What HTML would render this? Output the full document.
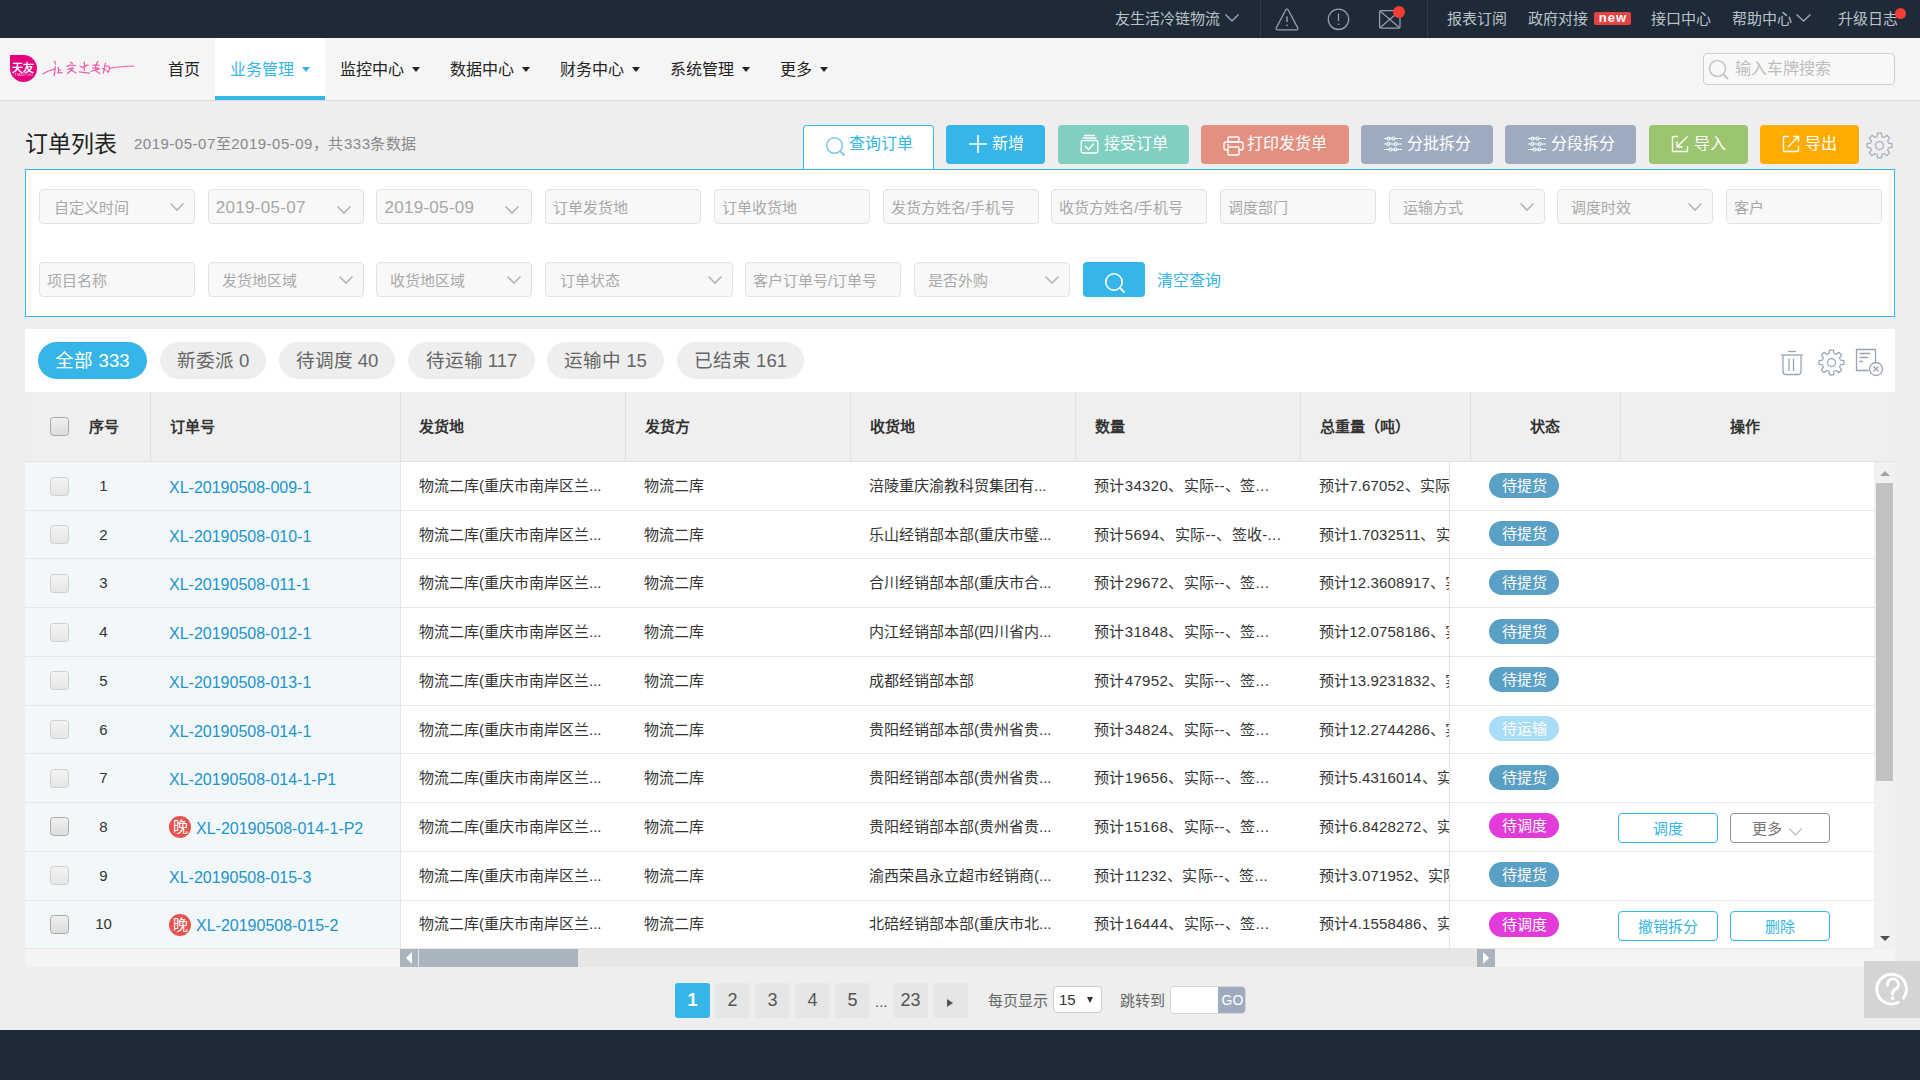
<!DOCTYPE html>
<html lang="zh-CN"><head><meta charset="utf-8">
<style>
*{box-sizing:border-box;margin:0;padding:0}
html,body{width:1920px;height:1080px;overflow:hidden}
body{position:relative;background:#eeeeee;font-family:"Liberation Sans",sans-serif;color:#333;font-size:15px}
.a{position:absolute;white-space:nowrap}
.topbar{left:0;top:0;width:1920px;height:38px;background:#1e2a38}
.tb{color:#bcc2c9;font-size:15px;line-height:38px;top:0}
.nav{left:0;top:38px;width:1920px;height:63px;background:#f5f5f5;border-bottom:1px solid #dcdcdc}
.tab{top:0;height:62px;line-height:64px;font-size:16px;color:#222}
.caret{display:inline-block;width:0;height:0;border-left:4px solid transparent;border-right:4px solid transparent;border-top:5px solid #222;vertical-align:middle;margin-left:8px;position:relative;top:-1px}
.btn{top:125px;height:39px;border-radius:4px;color:#fff;font-size:16px;line-height:37px}
.panel{left:25px;top:169px;width:1870px;height:148px;border:1px solid #35b5e8;background:#fff}
.fld{height:35px;border:1px solid #e2e2e2;border-radius:4px;background:#f8f8f8;color:#aaa;font-size:15px;line-height:35px}
.chev{position:absolute;right:9px;top:12px}
.card{left:25px;top:329px;width:1870px;height:63px;background:#fff}
.pill{top:342px;height:37px;line-height:38px;border-radius:19px;background:#eeeeee;color:#666;font-size:18.6px;text-align:center}
.thead{left:25px;top:392px;width:1870px;height:70px;background:#efefef;border-bottom:1px solid #e2e2e2}
.th{top:0;height:69px;line-height:69px;font-size:15px;font-weight:bold;color:#333}
.vd{top:0;width:1px;height:69px;background:#e0e0e0}
.row{height:49px;border-bottom:1px solid #e6e6e6}
.cell{line-height:48px;font-size:15px;color:#333}
</style></head><body>

<!-- TOP BAR -->
<div class="a topbar">
  <div class="a tb" style="left:1115px">友生活冷链物流</div>
  <svg class="a" style="left:1224px;top:13px" width="16" height="10" viewBox="0 0 16 10"><path d="M1.5 1.5 L8 8 L14.5 1.5" fill="none" stroke="#9aa3ad" stroke-width="1.5"/></svg>
  <div class="a" style="left:1260px;top:0;width:1px;height:38px;background:#2f3b49"></div>
  <svg class="a" style="left:1275px;top:8px" width="24" height="23" viewBox="0 0 24 23"><path d="M10.6 2.2 Q12 0 13.4 2.2 L22.6 19.6 Q23.6 21.8 21.4 21.8 H2.6 Q0.4 21.8 1.4 19.6 Z" fill="none" stroke="#959fa9" stroke-width="1.3" stroke-linejoin="round"/><path d="M12 8.5 V14" stroke="#959fa9" stroke-width="1.5"/><rect x="11.2" y="16.6" width="1.6" height="1.5" fill="#959fa9"/></svg>
  <svg class="a" style="left:1327px;top:8px" width="24" height="24" viewBox="0 0 24 24"><circle cx="11.5" cy="11.3" r="10.2" fill="none" stroke="#959fa9" stroke-width="1.3"/><path d="M11.5 5.5 V13" stroke="#959fa9" stroke-width="1.3"/><rect x="10.8" y="15.6" width="1.4" height="1.4" fill="#959fa9"/></svg>
  <svg class="a" style="left:1378px;top:9px" width="24" height="21" viewBox="0 0 24 21"><rect x="1.6" y="1.6" width="20.4" height="17.6" rx="1.5" fill="none" stroke="#959fa9" stroke-width="1.3"/><path d="M2 2 L21.6 18.8 M21.6 2 L2 18.8" fill="none" stroke="#959fa9" stroke-width="1.2"/></svg>
  <div class="a" style="left:1393px;top:6px;width:12px;height:12px;border-radius:6px;background:#f23d37"></div>
  <div class="a" style="left:1427px;top:0;width:1px;height:38px;background:#2f3b49"></div>
  <div class="a tb" style="left:1447px">报表订阅</div>
  <div class="a tb" style="left:1528px">政府对接</div>
  <div class="a" style="left:1594px;top:12px;width:37px;height:13px;border-radius:2px;background:#e8423f;color:#fff;font-size:13px;font-weight:bold;line-height:11.5px;text-align:center;letter-spacing:1px;text-indent:1px">new</div>
  <div class="a tb" style="left:1651px">接口中心</div>
  <div class="a tb" style="left:1732px">帮助中心</div>
  <svg class="a" style="left:1795px;top:13px" width="17" height="10" viewBox="0 0 17 10"><path d="M1.5 1.5 L8.5 8 L15.5 1.5" fill="none" stroke="#9aa3ad" stroke-width="1.5"/></svg>
  <div class="a tb" style="left:1838px">升级日志</div>
  <div class="a" style="left:1895px;top:8px;width:11px;height:11px;border-radius:6px;background:#f23d37"></div>
</div>
<!-- NAV -->
<div class="a nav">
  <svg class="a" style="left:10px;top:17px" width="27" height="27" viewBox="0 0 27 27"><path d="M0 0 H13.5 A13.5 13.5 0 0 1 27 13.5 A13.5 13.5 0 0 1 13.5 27 A13.5 13.5 0 0 1 0 13.5 Z" fill="#e5007f"/><text x="13" y="16.5" font-size="11" font-weight="bold" fill="#fff" text-anchor="middle" font-family="Liberation Sans, sans-serif">天友</text><text x="4.2" y="21.2" font-size="2.8" fill="#fff" fill-opacity="0.85" textLength="18.5" lengthAdjust="spacingAndGlyphs" font-family="Liberation Sans">TIANYOU</text></svg>
  <svg class="a" style="left:40px;top:18px" width="100" height="24" viewBox="0 0 100 24"><g fill="none" stroke="#e6007e" stroke-opacity="0.62" stroke-width="1.25" stroke-linecap="round" stroke-linejoin="round"><path d="M3 17.8 C6 16 10 14 14.5 13.2"/><path d="M14.8 5.2 L15.3 8.2"/><path d="M15.3 10.5 C15.2 13.5 14.8 16.5 14.2 19.6"/><path d="M18.2 11.5 L18.6 16.8 M17.2 17 L22.2 16.6 M18.4 14.2 L20.8 14"/><path d="M30.2 6.2 L32.4 7.4 M27 10.4 C30 8.8 33 9 35.2 9.6 M28 13.4 C30 12.2 32 11.6 33.4 12 C31.4 14 29.4 16 27.4 17.4 M30.4 13.6 C32.4 15 34.2 16 36 17"/><path d="M44.2 6.2 L44.6 9.2 M40.2 10.4 C42 11.4 44 12 45.2 10.4 C46.2 9.2 47 8.8 48.2 9.4 M44.2 9.6 L44.2 14.4 M39.4 15.8 C42.4 16.4 46.4 16.8 49.6 17.2"/><path d="M57.8 5.4 L55.4 10 L56 14.2 M53 9.2 H59 M52.4 12 H58.8 M51.2 15.4 C54 14.4 57 13.2 59.2 12.8 M55.4 14.4 L59.8 17.6"/><path d="M65.4 7.2 L63.4 17.2 M62.4 12.2 L66.2 14.2 M66.2 10.2 C68.2 9.2 70.2 10.2 69.4 13.2 C68.6 16 67.6 17.2 67.4 15.2 M69.4 12.4 C74 11.2 82 10.6 93.6 10"/></g></svg>
  <div class="a tab" style="left:168px">首页</div>
  <div class="a" style="left:215px;top:0;width:110px;height:62px;background:#fff;border-bottom:4px solid #35b5e8"></div>
  <div class="a tab" style="left:230px;color:#35b5e8">业务管理<span class="caret" style="border-top-color:#35b5e8"></span></div>
  <div class="a tab" style="left:340px">监控中心<span class="caret"></span></div>
  <div class="a tab" style="left:450px">数据中心<span class="caret"></span></div>
  <div class="a tab" style="left:560px">财务中心<span class="caret"></span></div>
  <div class="a tab" style="left:670px">系统管理<span class="caret"></span></div>
  <div class="a tab" style="left:780px">更多<span class="caret"></span></div>
  <div class="a" style="left:1703px;top:15px;width:192px;height:32px;border:1px solid #cfcfcf;border-radius:4px;background:#f8f8f8"></div>
  <svg class="a" style="left:1708px;top:21px" width="22" height="21" viewBox="0 0 22 21"><circle cx="9.5" cy="9.5" r="8" fill="none" stroke="#c6c6c6" stroke-width="1.6"/><path d="M15 15 L20 20" stroke="#c6c6c6" stroke-width="1.8"/></svg>
  <div class="a" style="left:1735px;top:15px;line-height:32px;font-size:16px;color:#bdbdbd">输入车牌搜索</div>
</div>

<!-- TITLE -->
<div class="a" style="left:25px;top:126px;font-size:23px;line-height:36px;color:#222">订单列表</div>
<div class="a" style="left:134px;top:132px;font-size:15px;line-height:24px;color:#888;letter-spacing:0.5px">2019-05-07至2019-05-09，共333条数据</div>
<div class="a" style="left:803px;top:125px;width:131px;height:45px;background:#fff;border:1px solid #35b5e8;border-bottom:none;border-radius:4px 4px 0 0"></div>
<svg class="a" style="left:825px;top:136px;z-index:3" width="22" height="21" viewBox="0 0 22 21"><circle cx="9.5" cy="9.5" r="7.8" fill="none" stroke="#7cc6ec" stroke-width="1.6"/><path d="M15 15 L19.5 19.5" stroke="#7cc6ec" stroke-width="1.8"/></svg>
<div class="a" style="left:849px;top:125px;line-height:37px;font-size:16px;color:#35b5e8;z-index:3">查询订单</div>
<div class="a btn" style="left:946px;width:99px;background:#35b5e8;text-align:center"><svg width="20" height="20" viewBox="0 0 20 20" style="vertical-align:middle;margin-right:4px;position:relative;top:-1px"><path d="M10 1 V19 M1 10 H19" stroke="#fff" stroke-width="1.6"/></svg>新增</div>
<div class="a btn" style="left:1058px;width:131px;background:#80cfc0;text-align:center"><svg width="19" height="20" viewBox="0 0 19 20" style="vertical-align:middle;margin-right:5px;position:relative;top:-1px"><path d="M4 1.5 H15 M2.5 4 H16.5" stroke="#fff" stroke-width="1.3"/><rect x="1.2" y="6.5" width="16.6" height="12.5" rx="2" fill="none" stroke="#fff" stroke-width="1.4"/><path d="M5 12 L8.5 15.5 L14 9.5" fill="none" stroke="#fff" stroke-width="1.4"/></svg>接受订单</div>
<div class="a btn" style="left:1201px;width:148px;background:#e49080;text-align:center"><svg width="21" height="20" viewBox="0 0 21 20" style="vertical-align:middle;margin-right:3px;position:relative;top:1px"><rect x="5" y="1" width="11" height="5" rx="1" fill="none" stroke="#fff" stroke-width="1.4"/><rect x="1" y="6" width="19" height="8" rx="2" fill="none" stroke="#fff" stroke-width="1.4"/><rect x="5" y="11" width="11" height="8" rx="1" fill="#e49080" stroke="#fff" stroke-width="1.4"/><path d="M4 9 H6" stroke="#fff" stroke-width="1.4"/></svg>打印发货单</div>
<div class="a btn" style="left:1361px;width:132px;background:#9eabbf;text-align:center"><svg width="20" height="16" viewBox="0 0 20 16" style="vertical-align:middle;margin-right:4px;position:relative;top:-1px"><g fill="none" stroke="#fff" stroke-width="1.2"><path d="M1 2.5 H4 M7 2.5 H9 M12 2.5 H19 M1 8 H4 M7 8 H11 M14 8 H19 M1 13.5 H6 M9 13.5 H11 M14 13.5 H19"/><circle cx="5.5" cy="2.5" r="1.5"/><circle cx="10.5" cy="2.5" r="1.5"/><circle cx="5.5" cy="8" r="1.5"/><circle cx="12.5" cy="8" r="1.5"/><circle cx="7.5" cy="13.5" r="1.5"/><circle cx="12.5" cy="13.5" r="1.5"/></g></svg>分批拆分</div>
<div class="a btn" style="left:1505px;width:131px;background:#9eabbf;text-align:center"><svg width="20" height="16" viewBox="0 0 20 16" style="vertical-align:middle;margin-right:4px;position:relative;top:-1px"><g fill="none" stroke="#fff" stroke-width="1.2"><path d="M1 2.5 H4 M7 2.5 H9 M12 2.5 H19 M1 8 H4 M7 8 H11 M14 8 H19 M1 13.5 H6 M9 13.5 H11 M14 13.5 H19"/><circle cx="5.5" cy="2.5" r="1.5"/><circle cx="10.5" cy="2.5" r="1.5"/><circle cx="5.5" cy="8" r="1.5"/><circle cx="12.5" cy="8" r="1.5"/><circle cx="7.5" cy="13.5" r="1.5"/><circle cx="12.5" cy="13.5" r="1.5"/></g></svg>分段拆分</div>
<div class="a btn" style="left:1649px;width:99px;background:#9bc56f;text-align:center"><svg width="18" height="18" viewBox="0 0 18 18" style="vertical-align:middle;margin-right:5px;position:relative;top:-1px"><path d="M7 1.5 H2.5 A1 1 0 0 0 1.5 2.5 V15.5 A1 1 0 0 0 2.5 16.5 H15.5 A1 1 0 0 0 16.5 15.5 V11" fill="none" stroke="#fff" stroke-width="1.4"/><path d="M16.5 1.5 L6 12 M6 6.5 V12 H11.5" fill="none" stroke="#fff" stroke-width="1.4"/></svg>导入</div>
<div class="a btn" style="left:1760px;width:99px;background:#ffab00;text-align:center"><svg width="18" height="18" viewBox="0 0 18 18" style="vertical-align:middle;margin-right:5px;position:relative;top:-1px"><path d="M7 1.5 H2.5 A1 1 0 0 0 1.5 2.5 V15.5 A1 1 0 0 0 2.5 16.5 H15.5 A1 1 0 0 0 16.5 15.5 V11" fill="none" stroke="#fff" stroke-width="1.4"/><path d="M6 12 L16.5 1.5 M11 1.5 H16.5 V7" fill="none" stroke="#fff" stroke-width="1.4"/></svg>导出</div>
<svg class="a" style="left:1865.5px;top:131.5px" width="27" height="27" viewBox="0 0 27 27"><path d="M11.12 4.51 L11.53 1.06 L15.47 1.06 L15.88 4.51 L18.17 5.46 L20.91 3.31 L23.69 6.09 L21.54 8.83 L22.49 11.12 L25.94 11.53 L25.94 15.47 L22.49 15.88 L21.54 18.17 L23.69 20.91 L20.91 23.69 L18.17 21.54 L15.88 22.49 L15.47 25.94 L11.53 25.94 L11.12 22.49 L8.83 21.54 L6.09 23.69 L3.31 20.91 L5.46 18.17 L4.51 15.88 L1.06 15.47 L1.06 11.53 L4.51 11.12 L5.46 8.83 L3.31 6.09 L6.09 3.31 L8.83 5.46 Z" fill="none" stroke="#a5aeba" stroke-width="1.25" stroke-linejoin="round"/><circle cx="13.5" cy="13.5" r="4" fill="none" stroke="#a5aeba" stroke-width="1.25"/></svg>
<!-- PANEL -->
<div class="a panel">
<div class="a fld" style="left:13.0px;top:19px;width:156px;padding-left:14px;font-size:15px;color:#a8a8a8">自定义时间<svg class="chev" width="16" height="10" viewBox="0 0 16 10"><path d="M1.5 1.5 L8 8 L14.5 1.5" fill="none" stroke="#b5b5b5" stroke-width="1.6"/></svg></div>
<div class="a fld" style="left:181.7px;top:19px;width:156px;padding-left:7px;font-size:17px;color:#a8a8a8;letter-spacing:0.3px">2019-05-07<svg class="chev" style="top:15px;right:11px" width="16" height="10" viewBox="0 0 16 10"><path d="M1.5 1.5 L8 8 L14.5 1.5" fill="none" stroke="#b5b5b5" stroke-width="1.6"/></svg></div>
<div class="a fld" style="left:350.4px;top:19px;width:156px;padding-left:7px;font-size:17px;color:#a8a8a8;letter-spacing:0.3px">2019-05-09<svg class="chev" style="top:15px;right:11px" width="16" height="10" viewBox="0 0 16 10"><path d="M1.5 1.5 L8 8 L14.5 1.5" fill="none" stroke="#b5b5b5" stroke-width="1.6"/></svg></div>
<div class="a fld" style="left:519.1px;top:19px;width:156px;padding-left:7px;font-size:15px;color:#a8a8a8">订单发货地</div>
<div class="a fld" style="left:687.8px;top:19px;width:156px;padding-left:7px;font-size:15px;color:#a8a8a8">订单收货地</div>
<div class="a fld" style="left:856.5px;top:19px;width:156px;padding-left:7px;font-size:15px;color:#a8a8a8">发货方姓名/手机号</div>
<div class="a fld" style="left:1025.2px;top:19px;width:156px;padding-left:7px;font-size:15px;color:#a8a8a8">收货方姓名/手机号</div>
<div class="a fld" style="left:1193.9px;top:19px;width:156px;padding-left:7px;font-size:15px;color:#a8a8a8">调度部门</div>
<div class="a fld" style="left:1362.6px;top:19px;width:156px;padding-left:13px;font-size:15px;color:#a8a8a8">运输方式<svg class="chev" width="16" height="10" viewBox="0 0 16 10"><path d="M1.5 1.5 L8 8 L14.5 1.5" fill="none" stroke="#b5b5b5" stroke-width="1.6"/></svg></div>
<div class="a fld" style="left:1531.3px;top:19px;width:156px;padding-left:13px;font-size:15px;color:#a8a8a8">调度时效<svg class="chev" width="16" height="10" viewBox="0 0 16 10"><path d="M1.5 1.5 L8 8 L14.5 1.5" fill="none" stroke="#b5b5b5" stroke-width="1.6"/></svg></div>
<div class="a fld" style="left:1700.0px;top:19px;width:156px;padding-left:7px;font-size:15px;color:#a8a8a8">客户</div>
<div class="a fld" style="left:13.0px;top:92px;width:156px;padding-left:7px">项目名称</div>
<div class="a fld" style="left:181.7px;top:92px;width:156px;padding-left:13px">发货地区域<svg class="chev" width="16" height="10" viewBox="0 0 16 10"><path d="M1.5 1.5 L8 8 L14.5 1.5" fill="none" stroke="#b5b5b5" stroke-width="1.6"/></svg></div>
<div class="a fld" style="left:350.4px;top:92px;width:156px;padding-left:13px">收货地区域<svg class="chev" width="16" height="10" viewBox="0 0 16 10"><path d="M1.5 1.5 L8 8 L14.5 1.5" fill="none" stroke="#b5b5b5" stroke-width="1.6"/></svg></div>
<div class="a fld" style="left:519.1px;top:92px;width:188px;padding-left:14px">订单状态<svg class="chev" width="16" height="10" viewBox="0 0 16 10"><path d="M1.5 1.5 L8 8 L14.5 1.5" fill="none" stroke="#b5b5b5" stroke-width="1.6"/></svg></div>
<div class="a fld" style="left:719.0px;top:92px;width:156px;padding-left:7px">客户订单号/订单号</div>
<div class="a fld" style="left:888.0px;top:92px;width:156px;padding-left:13px">是否外购<svg class="chev" width="16" height="10" viewBox="0 0 16 10"><path d="M1.5 1.5 L8 8 L14.5 1.5" fill="none" stroke="#b5b5b5" stroke-width="1.6"/></svg></div>
<div class="a" style="left:1057px;top:92px;width:62px;height:35px;border-radius:4px;background:#35b5e8"></div>
<svg class="a" style="left:1078px;top:102px" width="22" height="22" viewBox="0 0 22 22"><circle cx="10" cy="10" r="8.2" fill="none" stroke="#fff" stroke-width="1.6"/><path d="M16 16 L20.5 20.5" stroke="#fff" stroke-width="1.8"/></svg>
<div class="a" style="left:1131px;top:93px;line-height:35px;font-size:16px;color:#35b5e8">清空查询</div>
</div>
<!-- CARD -->
<div class="a card"></div>
<div class="a pill" style="left:38px;width:109px;background:#35b5e8;color:#fff">全部 333</div>
<div class="a pill" style="left:160px;width:106px;">新委派 0</div>
<div class="a pill" style="left:279px;width:116px;">待调度 40</div>
<div class="a pill" style="left:408px;width:127px;">待运输 117</div>
<div class="a pill" style="left:547px;width:117px;">运输中 15</div>
<div class="a pill" style="left:677px;width:127px;">已结束 161</div>
<svg class="a" style="left:1780px;top:350px" width="24" height="26" viewBox="0 0 24 26"><path d="M8 1.5 H16" stroke="#98a4b1" stroke-width="1.3"/><path d="M1 5 H23" stroke="#98a4b1" stroke-width="1.3"/><path d="M3 5 V22 A2.5 2.5 0 0 0 5.5 24.5 H18.5 A2.5 2.5 0 0 0 21 22 V5" fill="none" stroke="#98a4b1" stroke-width="1.3"/><path d="M9 8.5 V21 M13.5 8.5 V21" stroke="#98a4b1" stroke-width="1.3"/></svg>
<svg class="a" style="left:1817.5px;top:349px" width="27" height="27" viewBox="0 0 27 27"><path d="M11.12 4.51 L11.53 1.06 L15.47 1.06 L15.88 4.51 L18.17 5.46 L20.91 3.31 L23.69 6.09 L21.54 8.83 L22.49 11.12 L25.94 11.53 L25.94 15.47 L22.49 15.88 L21.54 18.17 L23.69 20.91 L20.91 23.69 L18.17 21.54 L15.88 22.49 L15.47 25.94 L11.53 25.94 L11.12 22.49 L8.83 21.54 L6.09 23.69 L3.31 20.91 L5.46 18.17 L4.51 15.88 L1.06 15.47 L1.06 11.53 L4.51 11.12 L5.46 8.83 L3.31 6.09 L6.09 3.31 L8.83 5.46 Z" fill="none" stroke="#98a4b1" stroke-width="1.25" stroke-linejoin="round"/><circle cx="13.5" cy="13.5" r="4" fill="none" stroke="#98a4b1" stroke-width="1.25"/></svg>
<svg class="a" style="left:1855px;top:348px" width="29" height="29" viewBox="0 0 29 29"><path d="M20.5 15 V1.5 H1.5 V22.5 H13.5" fill="none" stroke="#98a4b1" stroke-width="1.3"/><path d="M4.5 5.5 H15 M4.5 9.5 H13 M4.5 13.5 H8" stroke="#98a4b1" stroke-width="1.3"/><circle cx="21" cy="21" r="6.5" fill="#fff" stroke="#98a4b1" stroke-width="1.3"/><path d="M18.5 18.5 L23.5 23.5 M23.5 18.5 L18.5 23.5" stroke="#98a4b1" stroke-width="1.3"/></svg>
<!-- TABLE -->
<div class="a thead">
<div class="a" style="left:25px;top:25px;width:19px;height:19px;border-radius:3.5px;border:1px solid #a9a9a9;background:linear-gradient(#f0f0f0,#dcdcdc)"></div>
<div class="a th" style="left:64px">序号</div>
<div class="a th" style="left:145px">订单号</div>
<div class="a th" style="left:394px">发货地</div>
<div class="a th" style="left:620px">发货方</div>
<div class="a th" style="left:845px">收货地</div>
<div class="a th" style="left:1070px">数量</div>
<div class="a th" style="left:1295px">总重量（吨）</div>
<div class="a th" style="left:1445px;width:150px;text-align:center">状态</div>
<div class="a th" style="left:1595px;width:250px;text-align:center">操作</div>
<div class="a vd" style="left:125px"></div>
<div class="a vd" style="left:375px"></div>
<div class="a vd" style="left:600px"></div>
<div class="a vd" style="left:825px"></div>
<div class="a vd" style="left:1050px"></div>
<div class="a vd" style="left:1275px"></div>
<div class="a vd" style="left:1445px"></div>
<div class="a vd" style="left:1595px"></div>
</div>
<div class="a" style="left:25px;top:462px;width:375px;height:486px;background:#f2f7fa"></div>
<div class="a" style="left:400px;top:462px;width:1474px;height:486px;background:#fff"></div>
<div class="a" style="left:1449px;top:462px;width:1px;height:486px;background:#e3e3e3"></div>
<div class="a" style="left:400px;top:462px;width:1px;height:486px;background:#e6e6e6"></div>
<div class="a" style="left:25px;top:509.70px;width:1849px;height:1px;background:#e6e6e6"></div>
<div class="a" style="left:50px;top:477px;width:19px;height:19px;border-radius:3.5px;border:1px solid #cfcfcf;background:linear-gradient(#f3f3f3,#e6e6e6)"></div>
<div class="a cell" style="left:80px;width:47px;top:462.00px;text-align:center">1</div>
<div class="a cell" style="left:169px;top:462.00px;color:#1c94cc;font-size:16px;margin-top:2px">XL-20190508-009-1</div>
<div class="a cell" style="left:419px;top:462.00px">物流二库(重庆市南岸区兰...</div>
<div class="a cell" style="left:644px;top:462.00px">物流二库</div>
<div class="a cell" style="left:869px;top:462.00px">涪陵重庆渝教科贸集团有...</div>
<div class="a cell" style="left:1094px;top:462.00px;letter-spacing:0.35px">预计34320、实际--、签...</div>
<div class="a cell" style="left:1319px;top:462.00px;width:130px;overflow:hidden;letter-spacing:0.15px">预计7.67052、实际--、签收--</div>
<div class="a" style="left:1489px;top:472.50px;width:70px;height:25px;border-radius:13px;background:#5a9fc6;color:#fff;font-size:15px;line-height:25px;text-align:center">待提货</div>
<div class="a" style="left:25px;top:558.40px;width:1849px;height:1px;background:#e6e6e6"></div>
<div class="a" style="left:50px;top:525px;width:19px;height:19px;border-radius:3.5px;border:1px solid #cfcfcf;background:linear-gradient(#f3f3f3,#e6e6e6)"></div>
<div class="a cell" style="left:80px;width:47px;top:510.70px;text-align:center">2</div>
<div class="a cell" style="left:169px;top:510.70px;color:#1c94cc;font-size:16px;margin-top:2px">XL-20190508-010-1</div>
<div class="a cell" style="left:419px;top:510.70px">物流二库(重庆市南岸区兰...</div>
<div class="a cell" style="left:644px;top:510.70px">物流二库</div>
<div class="a cell" style="left:869px;top:510.70px">乐山经销部本部(重庆市璧...</div>
<div class="a cell" style="left:1094px;top:510.70px;letter-spacing:0.35px">预计5694、实际--、签收-...</div>
<div class="a cell" style="left:1319px;top:510.70px;width:130px;overflow:hidden;letter-spacing:0.15px">预计1.7032511、实际--、签收</div>
<div class="a" style="left:1489px;top:521.20px;width:70px;height:25px;border-radius:13px;background:#5a9fc6;color:#fff;font-size:15px;line-height:25px;text-align:center">待提货</div>
<div class="a" style="left:25px;top:607.10px;width:1849px;height:1px;background:#e6e6e6"></div>
<div class="a" style="left:50px;top:574px;width:19px;height:19px;border-radius:3.5px;border:1px solid #cfcfcf;background:linear-gradient(#f3f3f3,#e6e6e6)"></div>
<div class="a cell" style="left:80px;width:47px;top:559.40px;text-align:center">3</div>
<div class="a cell" style="left:169px;top:559.40px;color:#1c94cc;font-size:16px;margin-top:2px">XL-20190508-011-1</div>
<div class="a cell" style="left:419px;top:559.40px">物流二库(重庆市南岸区兰...</div>
<div class="a cell" style="left:644px;top:559.40px">物流二库</div>
<div class="a cell" style="left:869px;top:559.40px">合川经销部本部(重庆市合...</div>
<div class="a cell" style="left:1094px;top:559.40px;letter-spacing:0.35px">预计29672、实际--、签...</div>
<div class="a cell" style="left:1319px;top:559.40px;width:130px;overflow:hidden;letter-spacing:0.15px">预计12.3608917、实际--、签</div>
<div class="a" style="left:1489px;top:569.90px;width:70px;height:25px;border-radius:13px;background:#5a9fc6;color:#fff;font-size:15px;line-height:25px;text-align:center">待提货</div>
<div class="a" style="left:25px;top:655.80px;width:1849px;height:1px;background:#e6e6e6"></div>
<div class="a" style="left:50px;top:623px;width:19px;height:19px;border-radius:3.5px;border:1px solid #cfcfcf;background:linear-gradient(#f3f3f3,#e6e6e6)"></div>
<div class="a cell" style="left:80px;width:47px;top:608.10px;text-align:center">4</div>
<div class="a cell" style="left:169px;top:608.10px;color:#1c94cc;font-size:16px;margin-top:2px">XL-20190508-012-1</div>
<div class="a cell" style="left:419px;top:608.10px">物流二库(重庆市南岸区兰...</div>
<div class="a cell" style="left:644px;top:608.10px">物流二库</div>
<div class="a cell" style="left:869px;top:608.10px">内江经销部本部(四川省内...</div>
<div class="a cell" style="left:1094px;top:608.10px;letter-spacing:0.35px">预计31848、实际--、签...</div>
<div class="a cell" style="left:1319px;top:608.10px;width:130px;overflow:hidden;letter-spacing:0.15px">预计12.0758186、实际--、签</div>
<div class="a" style="left:1489px;top:618.60px;width:70px;height:25px;border-radius:13px;background:#5a9fc6;color:#fff;font-size:15px;line-height:25px;text-align:center">待提货</div>
<div class="a" style="left:25px;top:704.50px;width:1849px;height:1px;background:#e6e6e6"></div>
<div class="a" style="left:50px;top:671px;width:19px;height:19px;border-radius:3.5px;border:1px solid #cfcfcf;background:linear-gradient(#f3f3f3,#e6e6e6)"></div>
<div class="a cell" style="left:80px;width:47px;top:656.80px;text-align:center">5</div>
<div class="a cell" style="left:169px;top:656.80px;color:#1c94cc;font-size:16px;margin-top:2px">XL-20190508-013-1</div>
<div class="a cell" style="left:419px;top:656.80px">物流二库(重庆市南岸区兰...</div>
<div class="a cell" style="left:644px;top:656.80px">物流二库</div>
<div class="a cell" style="left:869px;top:656.80px">成都经销部本部</div>
<div class="a cell" style="left:1094px;top:656.80px;letter-spacing:0.35px">预计47952、实际--、签...</div>
<div class="a cell" style="left:1319px;top:656.80px;width:130px;overflow:hidden;letter-spacing:0.15px">预计13.9231832、实际--、签</div>
<div class="a" style="left:1489px;top:667.30px;width:70px;height:25px;border-radius:13px;background:#5a9fc6;color:#fff;font-size:15px;line-height:25px;text-align:center">待提货</div>
<div class="a" style="left:25px;top:753.20px;width:1849px;height:1px;background:#e6e6e6"></div>
<div class="a" style="left:50px;top:720px;width:19px;height:19px;border-radius:3.5px;border:1px solid #cfcfcf;background:linear-gradient(#f3f3f3,#e6e6e6)"></div>
<div class="a cell" style="left:80px;width:47px;top:705.50px;text-align:center">6</div>
<div class="a cell" style="left:169px;top:705.50px;color:#1c94cc;font-size:16px;margin-top:2px">XL-20190508-014-1</div>
<div class="a cell" style="left:419px;top:705.50px">物流二库(重庆市南岸区兰...</div>
<div class="a cell" style="left:644px;top:705.50px">物流二库</div>
<div class="a cell" style="left:869px;top:705.50px">贵阳经销部本部(贵州省贵...</div>
<div class="a cell" style="left:1094px;top:705.50px;letter-spacing:0.35px">预计34824、实际--、签...</div>
<div class="a cell" style="left:1319px;top:705.50px;width:130px;overflow:hidden;letter-spacing:0.15px">预计12.2744286、实际--、签</div>
<div class="a" style="left:1489px;top:716.00px;width:70px;height:25px;border-radius:13px;background:#a9dcf6;color:#fff;font-size:15px;line-height:25px;text-align:center">待运输</div>
<div class="a" style="left:25px;top:801.90px;width:1849px;height:1px;background:#e6e6e6"></div>
<div class="a" style="left:50px;top:769px;width:19px;height:19px;border-radius:3.5px;border:1px solid #cfcfcf;background:linear-gradient(#f3f3f3,#e6e6e6)"></div>
<div class="a cell" style="left:80px;width:47px;top:754.20px;text-align:center">7</div>
<div class="a cell" style="left:169px;top:754.20px;color:#1c94cc;font-size:16px;margin-top:2px">XL-20190508-014-1-P1</div>
<div class="a cell" style="left:419px;top:754.20px">物流二库(重庆市南岸区兰...</div>
<div class="a cell" style="left:644px;top:754.20px">物流二库</div>
<div class="a cell" style="left:869px;top:754.20px">贵阳经销部本部(贵州省贵...</div>
<div class="a cell" style="left:1094px;top:754.20px;letter-spacing:0.35px">预计19656、实际--、签...</div>
<div class="a cell" style="left:1319px;top:754.20px;width:130px;overflow:hidden;letter-spacing:0.15px">预计5.4316014、实际--、签收</div>
<div class="a" style="left:1489px;top:764.70px;width:70px;height:25px;border-radius:13px;background:#5a9fc6;color:#fff;font-size:15px;line-height:25px;text-align:center">待提货</div>
<div class="a" style="left:25px;top:850.60px;width:1849px;height:1px;background:#e6e6e6"></div>
<div class="a" style="left:50px;top:817px;width:19px;height:19px;border-radius:3.5px;border:1px solid #a9a9a9;background:linear-gradient(#f0f0f0,#dcdcdc)"></div>
<div class="a cell" style="left:80px;width:47px;top:802.90px;text-align:center">8</div>
<div class="a" style="left:169px;top:816.40px;width:22px;height:22px;border-radius:11px;background:#e8524f;color:#fff;font-size:15px;line-height:22px;text-align:center">晚</div>
<div class="a cell" style="left:196px;top:802.90px;color:#1c94cc;font-size:16px;margin-top:2px">XL-20190508-014-1-P2</div>
<div class="a cell" style="left:419px;top:802.90px">物流二库(重庆市南岸区兰...</div>
<div class="a cell" style="left:644px;top:802.90px">物流二库</div>
<div class="a cell" style="left:869px;top:802.90px">贵阳经销部本部(贵州省贵...</div>
<div class="a cell" style="left:1094px;top:802.90px;letter-spacing:0.35px">预计15168、实际--、签...</div>
<div class="a cell" style="left:1319px;top:802.90px;width:130px;overflow:hidden;letter-spacing:0.15px">预计6.8428272、实际--、签收</div>
<div class="a" style="left:1489px;top:813.40px;width:70px;height:25px;border-radius:13px;background:#e23bd9;color:#fff;font-size:15px;line-height:25px;text-align:center">待调度</div>
<div class="a" style="left:1618px;top:812.90px;width:100px;height:30px;border:1px solid #35b5e8;border-radius:4px;color:#35b5e8;font-size:15px;line-height:30px;text-align:center;background:#fff">调度</div>
<div class="a" style="left:1730px;top:812.90px;width:100px;height:30px;border:1px solid #8f8f8f;border-radius:4px;color:#777;font-size:15px;line-height:30px;padding-left:21px;background:#fff">更多<svg class="a" style="left:57px;top:13px" width="15" height="10" viewBox="0 0 15 10"><path d="M1 1.2 L7.5 8 L14 1.2" fill="none" stroke="#c4c4c4" stroke-width="1.4"/></svg></div>
<div class="a" style="left:25px;top:900px;width:1849px;height:1px;background:#e6e6e6"></div>
<div class="a" style="left:50px;top:866px;width:19px;height:19px;border-radius:3.5px;border:1px solid #cfcfcf;background:linear-gradient(#f3f3f3,#e6e6e6)"></div>
<div class="a cell" style="left:80px;width:47px;top:851.60px;text-align:center">9</div>
<div class="a cell" style="left:169px;top:851.60px;color:#1c94cc;font-size:16px;margin-top:2px">XL-20190508-015-3</div>
<div class="a cell" style="left:419px;top:851.60px">物流二库(重庆市南岸区兰...</div>
<div class="a cell" style="left:644px;top:851.60px">物流二库</div>
<div class="a cell" style="left:869px;top:851.60px">渝西荣昌永立超市经销商(...</div>
<div class="a cell" style="left:1094px;top:851.60px;letter-spacing:0.35px">预计11232、实际--、签...</div>
<div class="a cell" style="left:1319px;top:851.60px;width:130px;overflow:hidden;letter-spacing:0.15px">预计3.071952、实际--、签收</div>
<div class="a" style="left:1489px;top:862.10px;width:70px;height:25px;border-radius:13px;background:#5a9fc6;color:#fff;font-size:15px;line-height:25px;text-align:center">待提货</div>
<div class="a" style="left:25px;top:948.00px;width:1849px;height:1px;background:#e6e6e6"></div>
<div class="a" style="left:50px;top:915px;width:19px;height:19px;border-radius:3.5px;border:1px solid #a9a9a9;background:linear-gradient(#f0f0f0,#dcdcdc)"></div>
<div class="a cell" style="left:80px;width:47px;top:900.30px;text-align:center">10</div>
<div class="a" style="left:169px;top:913.80px;width:22px;height:22px;border-radius:11px;background:#e8524f;color:#fff;font-size:15px;line-height:22px;text-align:center">晚</div>
<div class="a cell" style="left:196px;top:900.30px;color:#1c94cc;font-size:16px;margin-top:2px">XL-20190508-015-2</div>
<div class="a cell" style="left:419px;top:900.30px">物流二库(重庆市南岸区兰...</div>
<div class="a cell" style="left:644px;top:900.30px">物流二库</div>
<div class="a cell" style="left:869px;top:900.30px">北碚经销部本部(重庆市北...</div>
<div class="a cell" style="left:1094px;top:900.30px;letter-spacing:0.35px">预计16444、实际--、签...</div>
<div class="a cell" style="left:1319px;top:900.30px;width:130px;overflow:hidden;letter-spacing:0.15px">预计4.1558486、实际--、签收</div>
<div class="a" style="left:1489px;top:911.80px;width:70px;height:25px;border-radius:13px;background:#e23bd9;color:#fff;font-size:15px;line-height:25px;text-align:center">待调度</div>
<div class="a" style="left:1618px;top:911.30px;width:100px;height:30px;border:1px solid #35b5e8;border-radius:4px;color:#35b5e8;font-size:15px;line-height:30px;text-align:center;background:#fff">撤销拆分</div>
<div class="a" style="left:1730px;top:911.30px;width:100px;height:30px;border:1px solid #35b5e8;border-radius:4px;color:#35b5e8;font-size:15px;line-height:30px;text-align:center;background:#fff">删除</div>
<div class="a" style="left:1874px;top:462px;width:21px;height:486px;background:#f1f1f1"></div>
<div class="a" style="left:1880px;top:471px;width:0;height:0;border-left:5px solid transparent;border-right:5px solid transparent;border-bottom:5px solid #a3a3a3"></div>
<div class="a" style="left:1876px;top:483px;width:17px;height:298px;background:#c1c1c1"></div>
<div class="a" style="left:1880px;top:936px;width:0;height:0;border-left:5px solid transparent;border-right:5px solid transparent;border-top:5px solid #505050"></div>
<div class="a" style="left:25px;top:949px;width:1870px;height:18px;background:#f5f3f3"></div>
<div class="a" style="left:400px;top:949px;width:1095px;height:18px;background:#e6e6e6"></div>
<div class="a" style="left:400px;top:949px;width:18px;height:18px;background:#aab4bf"></div>
<div class="a" style="left:406px;top:952px;width:0;height:0;border-top:6px solid transparent;border-bottom:6px solid transparent;border-right:6px solid #fff"></div>
<div class="a" style="left:419px;top:949px;width:159px;height:18px;background:#aab4bf"></div>
<div class="a" style="left:1477px;top:949px;width:18px;height:18px;background:#aab4bf"></div>
<div class="a" style="left:1483px;top:952px;width:0;height:0;border-top:6px solid transparent;border-bottom:6px solid transparent;border-left:6px solid #fff"></div>
<!-- PAGINATION -->
<div class="a" style="left:675px;top:983px;width:35px;height:35px;border-radius:3px;line-height:35px;text-align:center;font-size:18px;background:#35b5e8;color:#fff;font-weight:bold">1</div>
<div class="a" style="left:715px;top:983px;width:35px;height:35px;border-radius:3px;line-height:35px;text-align:center;font-size:18px;background:#e6e6e6;color:#555">2</div>
<div class="a" style="left:755px;top:983px;width:35px;height:35px;border-radius:3px;line-height:35px;text-align:center;font-size:18px;background:#e6e6e6;color:#555">3</div>
<div class="a" style="left:795px;top:983px;width:35px;height:35px;border-radius:3px;line-height:35px;text-align:center;font-size:18px;background:#e6e6e6;color:#555">4</div>
<div class="a" style="left:835px;top:983px;width:35px;height:35px;border-radius:3px;line-height:35px;text-align:center;font-size:18px;background:#e6e6e6;color:#555">5</div>
<div class="a" style="left:893px;top:983px;width:35px;height:35px;border-radius:3px;line-height:35px;text-align:center;font-size:18px;background:#e6e6e6;color:#555">23</div>
<div class="a" style="left:875px;top:983px;line-height:38px;font-size:15px;color:#555">...</div>
<div class="a" style="left:933px;top:983px;width:35px;height:35px;border-radius:3px;background:#e6e6e6"></div>
<div class="a" style="left:947px;top:999px;width:0;height:0;border-top:4.5px solid transparent;border-bottom:4.5px solid transparent;border-left:6px solid #555"></div>
<div class="a" style="left:988px;top:983px;line-height:35px;font-size:15px;color:#666">每页显示</div>
<div class="a" style="left:1053px;top:986px;width:49px;height:27px;border:1px solid #cdcdcd;border-radius:4px;background:#fff;font-size:15px;line-height:25px;padding-left:5px;color:#333">15</div>
<div class="a" style="left:1087px;top:997px;width:0;height:0;border-left:3.5px solid transparent;border-right:3.5px solid transparent;border-top:6px solid #333"></div>
<div class="a" style="left:1120px;top:983px;line-height:35px;font-size:15px;color:#666">跳转到</div>
<div class="a" style="left:1170px;top:986px;width:76px;height:28px;border:1px solid #d5d5d5;border-radius:4px;background:#fff;overflow:hidden"><div class="a" style="left:47px;top:-1px;width:29px;height:28px;background:#9eabbf;color:#fff;font-size:14px;line-height:28px;text-align:center">GO</div></div>
<div class="a" style="left:1864px;top:961px;width:56px;height:57px;background:#d4d4d4"></div>
<svg class="a" style="left:1875px;top:971px" width="36" height="36" viewBox="0 0 36 36"><path d="M28.5 27 A14.8 14.8 0 1 0 23 31.5" fill="none" stroke="#fff" stroke-width="3" stroke-linecap="round"/><path d="M12.5 14 A5.5 5.5 0 1 1 20 18.5 C18 19.5 17.5 21 17.5 23" fill="none" stroke="#fff" stroke-width="3" stroke-linecap="round"/><rect x="15.8" y="25.5" width="3.4" height="3.2" fill="#fff"/></svg>
<div class="a" style="left:0;top:1030px;width:1920px;height:50px;background:#1e2a38"></div>
</body></html>
